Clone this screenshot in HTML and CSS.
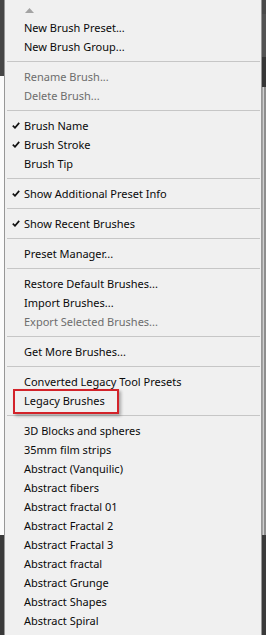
FILE: index.html
```html
<!DOCTYPE html>
<html lang="en">
<head>
    <meta charset="UTF-8">
    <meta name="viewport" content="width=device-width, initial-scale=1.0">
    <title>Brush Preset Menu</title>
    <link rel="stylesheet" href="styles.css">
</head>
<body>
    <div class="screen">
        <div class="edge edge-left">
            <div class="dark-top"></div>
            <div class="light-mid"></div>
            <div class="dark-bottom"></div>
        </div>

        <div class="menu">
            <div class="scroll-up">
                <svg width="9" height="5" viewBox="0 0 9 5"><polygon points="0,5 4.5,0 9,5" fill="#a3a3a3"/></svg>
            </div>

            <div class="item"><span class="tick"></span><span>New Brush Preset...</span></div>
            <div class="item"><span class="tick"></span><span>New Brush Group...</span></div>
            <div class="sep"></div>
            <div class="item disabled"><span class="tick"></span><span>Rename Brush...</span></div>
            <div class="item disabled"><span class="tick"></span><span>Delete Brush...</span></div>
            <div class="sep"></div>
            <div class="item"><span class="tick"><svg width="8" height="7" viewBox="0 0 8 7"><path d="M0.8 3.6 L3 5.8 L7.2 0.9" fill="none" stroke="#111" stroke-width="1.7"/></svg></span><span>Brush Name</span></div>
            <div class="item"><span class="tick"><svg width="8" height="7" viewBox="0 0 8 7"><path d="M0.8 3.6 L3 5.8 L7.2 0.9" fill="none" stroke="#111" stroke-width="1.7"/></svg></span><span>Brush Stroke</span></div>
            <div class="item"><span class="tick"></span><span>Brush Tip</span></div>
            <div class="sep"></div>
            <div class="item"><span class="tick"><svg width="8" height="7" viewBox="0 0 8 7"><path d="M0.8 3.6 L3 5.8 L7.2 0.9" fill="none" stroke="#111" stroke-width="1.7"/></svg></span><span>Show Additional Preset Info</span></div>
            <div class="sep"></div>
            <div class="item"><span class="tick"><svg width="8" height="7" viewBox="0 0 8 7"><path d="M0.8 3.6 L3 5.8 L7.2 0.9" fill="none" stroke="#111" stroke-width="1.7"/></svg></span><span>Show Recent Brushes</span></div>
            <div class="sep"></div>
            <div class="item"><span class="tick"></span><span>Preset Manager...</span></div>
            <div class="sep"></div>
            <div class="item"><span class="tick"></span><span>Restore Default Brushes...</span></div>
            <div class="item"><span class="tick"></span><span>Import Brushes...</span></div>
            <div class="item disabled"><span class="tick"></span><span>Export Selected Brushes...</span></div>
            <div class="sep"></div>
            <div class="item"><span class="tick"></span><span>Get More Brushes...</span></div>
            <div class="sep"></div>
            <div class="item"><span class="tick"></span><span>Converted Legacy Tool Presets</span></div>
            <div class="item marked"><span class="tick"></span><span>Legacy Brushes</span><span class="callout"></span></div>
            <div class="sep"></div>
            <div class="item"><span class="tick"></span><span>3D Blocks and spheres</span></div>
            <div class="item"><span class="tick"></span><span>35mm film strips</span></div>
            <div class="item"><span class="tick"></span><span>Abstract (Vanquilic)</span></div>
            <div class="item"><span class="tick"></span><span>Abstract fibers</span></div>
            <div class="item"><span class="tick"></span><span>Abstract fractal 01</span></div>
            <div class="item"><span class="tick"></span><span>Abstract Fractal 2</span></div>
            <div class="item"><span class="tick"></span><span>Abstract Fractal 3</span></div>
            <div class="item"><span class="tick"></span><span>Abstract fractal</span></div>
            <div class="item"><span class="tick"></span><span>Abstract Grunge</span></div>
            <div class="item"><span class="tick"></span><span>Abstract Shapes</span></div>
            <div class="item"><span class="tick"></span><span>Abstract Spiral</span></div>
        </div>

        <div class="edge edge-right">
            <div class="band-a"></div>
            <div class="band-b"></div>
            <div class="band-c"></div>
            <div class="shadow-mid"></div>
            <div class="dark-bottom"></div>
        </div>
    </div>
</body>
</html>
```

FILE: styles.css
```css
body {
    margin: 0;
    padding: 0;
    background-color: #3c3c3c;
    font-family: "Noto Sans", "Liberation Sans", sans-serif;
    font-size: 11px;
    overflow: hidden;
}

.screen {
    display: grid;
    grid-template-columns: 4px 258px 4px;
    width: 266px;
    height: 635px;
    overflow: hidden;
}

/* strips of the app window showing on both sides */
.edge {
    display: flex;
    flex-direction: column;
}

.edge-left .dark-top {
    height: 76px;
    background-color: #464646;
}

.edge-left .light-mid {
    height: 459px;
    background-color: #fbfbfb;
}

.dark-bottom {
    flex: 1;
    background-color: #3a3a3a;
}

.edge-right .band-a {
    height: 14px;
    background-color: #4a4a4a;
}

.edge-right .band-b {
    height: 43px;
    background-color: #535353;
}

.edge-right .band-c {
    height: 30px;
    background-color: #363636;
}

.edge-right .shadow-mid {
    height: 448px;
    background: linear-gradient(90deg, #a2a2a2 0, #a2a2a2 1px, #cfcfcf 1px, #cfcfcf 2px, #8e8e8e 2px);
}

/* the popup menu */
.menu {
    background-color: #f0f0f0;
    border-left: 1px solid #979797;
    border-right: 1px solid #979797;
    color: #0a0a0a;
    overflow: hidden;
}

.scroll-up {
    height: 18px;
    display: flex;
    align-items: center;
    padding-left: 20px;
}

.scroll-up svg {
    display: block;
    margin-top: 2px;
}

.item {
    position: relative;
    display: grid;
    grid-template-columns: 19px auto;
    align-items: center;
    height: 19px;
    line-height: 19px;
    white-space: nowrap;
}

.item .tick {
    display: flex;
    align-items: center;
    padding-left: 7px;
}

.item .tick svg {
    display: block;
}

.item.disabled {
    color: #6d6d6d;
}

.sep {
    margin: 5px 1px 5px 2px;
    border-top: 1px solid #c6c6c6;
}

/* red annotation box drawn over the item */
.callout {
    position: absolute;
    left: 8px;
    top: -2px;
    width: 102px;
    height: 21px;
    border: 2px solid #d3232a;
    box-shadow: 2px 2px 3px rgba(0, 0, 0, 0.3);
}
```
